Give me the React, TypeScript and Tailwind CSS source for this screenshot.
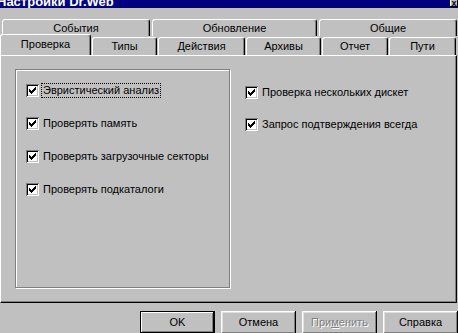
import React from "react";

const raised =
  "shadow-[inset_-1px_-1px_#000,inset_1px_1px_#fff,inset_-2px_-2px_#808080,inset_2px_2px_#dfdfdf]";

// classic 7x7 check glyph, one 3px column per x
const checkCols = [2, 3, 4, 3, 2, 1, 0];

function Check({ label, focused }: { label: string; focused?: boolean }) {
  return (
    <div className="flex items-center h-[13px]">
      <div className="w-[13px] h-[13px] bg-white shrink-0 flex items-center justify-center shadow-[inset_1px_1px_#808080,inset_-1px_-1px_#fff,inset_2px_2px_#000,inset_-2px_-2px_#c0c0c0]">
        <svg width="7" height="7" viewBox="0 0 7 7" shapeRendering="crispEdges">
          {checkCols.map((y, x) => (
            <rect key={x} x={x} y={y} width="1" height="3" fill="#000" />
          ))}
        </svg>
      </div>
      <span
        className={
          "ml-[3px] px-[1px] leading-[13px] " +
          (focused ? "outline-1 outline-dotted outline-black" : "")
        }
      >
        {label}
      </span>
    </div>
  );
}

function BackTab({ label, w }: { label: string; w: string }) {
  return (
    <div
      className={
        w +
        " h-[17px] flex items-center justify-center border-t border-l border-r border-t-white border-l-white border-r-black rounded-t-[3px] shadow-[inset_-1px_0_#808080]"
      }
    >
      {label}
    </div>
  );
}

function FrontTab({ label, w }: { label: string; w: string }) {
  return (
    <div
      className={
        w +
        " h-[18px] mt-[1px] flex items-center justify-center border-t border-l border-r border-t-white border-l-white border-r-black rounded-t-[3px] shadow-[inset_-1px_0_#808080]"
      }
    >
      {label}
    </div>
  );
}

function Button({
  label,
  def,
  disabled,
}: {
  label: React.ReactNode;
  def?: boolean;
  disabled?: boolean;
}) {
  return (
    <div
      className={
        "w-[75px] h-[23px] shrink-0 flex items-center justify-center bg-[#c0c0c0] " +
        (def
          ? "border border-black shadow-[inset_-1px_-1px_#000,inset_1px_1px_#fff,inset_-2px_-2px_#808080]"
          : raised) +
        (disabled ? " text-[#808080] [text-shadow:1px_1px_#fff]" : "")
      }
    >
      {label}
    </div>
  );
}

export default function App() {
  return (
    <div className="w-[458px] h-[333px] overflow-hidden bg-[#c0c0c0] text-black text-[11px] font-['Liberation_Sans',Arial,sans-serif]">
      {/* title bar, top cut off */}
      <div className="h-[8px] bg-[#000080] flex justify-between overflow-hidden">
        <span className="text-white font-bold text-[13px] leading-[13px] mt-[-5px] ml-[-3px] whitespace-nowrap">
          Настройки Dr.Web
        </span>
        <div className="w-[8px] h-[8px] mt-[-1px] bg-[#c0c0c0] shadow-[inset_-1px_-1px_#000,inset_1px_0_#fff] flex items-end justify-center text-[9px] leading-[8px] font-bold">
          x
        </div>
      </div>

      {/* tab rows */}
      <div className="mt-[11px] flex pl-[2px] gap-[2px]">
        <BackTab label="События" w="w-[148px]" />
        <BackTab label="Обновление" w="w-[165px]" />
        <BackTab label="Общие" w="w-[138px]" />
      </div>
      <div className="flex h-[19px] relative z-10">
        <div className="w-[91px] h-[21px] mt-[-2px] flex items-center justify-center bg-[#c0c0c0] border-t border-l border-r border-t-white border-l-white border-r-black rounded-t-[3px] shadow-[inset_-1px_0_#808080] pb-[2px]">
          Проверка
        </div>
        <div className="flex gap-[1px] ml-[1px]">
          <FrontTab label="Типы" w="w-[65px]" />
          <FrontTab label="Действия" w="w-[87px]" />
          <FrontTab label="Архивы" w="w-[75px]" />
          <FrontTab label="Отчет" w="w-[66px]" />
          <FrontTab label="Пути" w="w-[67px]" />
        </div>
      </div>

      {/* page */}
      <div className="w-[457px] h-[248px] flex border-l border-t border-b border-r border-l-white border-t-white border-b-black border-r-black shadow-[inset_-1px_-1px_#808080]">
        <div className="ml-[14px] mt-[13px] w-[215px] h-[219px] border border-[#808080] shadow-[1px_1px_#fff,inset_1px_1px_#fff] pl-[10px] pt-[14px] flex flex-col gap-[20px]">
          <Check label="Эвристический анализ" focused />
          <Check label="Проверять память" />
          <Check label="Проверять загрузочные секторы" />
          <Check label="Проверять подкаталоги" />
        </div>
        <div className="ml-[15px] mt-[30px] flex flex-col gap-[19px]">
          <Check label="Проверка нескольких дискет" />
          <Check label="Запрос подтверждения всегда" />
        </div>
      </div>

      {/* buttons */}
      <div className="mt-[8px] flex justify-end gap-[6px]">
        <Button label="OK" def />
        <Button label="Отмена" />
        <Button
          label={
            <span>
              При<span className="underline">м</span>енить
            </span>
          }
          disabled
        />
        <Button label="Справка" />
      </div>
    </div>
  );
}
